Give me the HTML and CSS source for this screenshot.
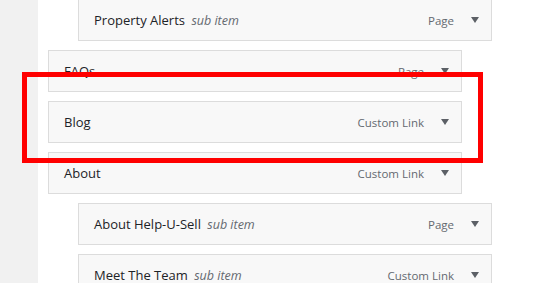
FILE: index.html
```html
<!DOCTYPE html>
<html>
<head>
<meta charset="utf-8">
<link rel="stylesheet" href="styles.css">
</head>
<body>
<div class="screen">
  <aside class="sidebar"></aside>
  <main class="content">
    <ul class="menu">
      <li class="item sub">
        <div class="handle">
          <span class="title">Property Alerts <span class="is-sub">sub item</span></span>
          <span class="controls"><span class="type">Page</span><span class="arrow"></span></span>
        </div>
      </li>
      <li class="item">
        <div class="handle">
          <span class="title">FAQs</span>
          <span class="controls"><span class="type">Page</span><span class="arrow"></span></span>
        </div>
      </li>
      <li class="item">
        <div class="handle">
          <span class="title">Blog</span>
          <span class="controls"><span class="type">Custom Link</span><span class="arrow"></span></span>
        </div>
      </li>
      <li class="item">
        <div class="handle">
          <span class="title">About</span>
          <span class="controls"><span class="type">Custom Link</span><span class="arrow"></span></span>
        </div>
      </li>
      <li class="item sub">
        <div class="handle">
          <span class="title">About Help-U-Sell <span class="is-sub">sub item</span></span>
          <span class="controls"><span class="type">Page</span><span class="arrow"></span></span>
        </div>
      </li>
      <li class="item sub">
        <div class="handle">
          <span class="title">Meet The Team <span class="is-sub">sub item</span></span>
          <span class="controls"><span class="type">Custom Link</span><span class="arrow"></span></span>
        </div>
      </li>
    </ul>
  </main>
  <div class="highlight"></div>
</div>
</body>
</html>
```

FILE: styles.css
```css
html, body {
  margin: 0;
  padding: 0;
  background: #ffffff;
}
.screen {
  position: relative;
  display: flex;
  width: 540px;
  height: 283px;
  overflow: hidden;
  font-family: "Open Sans", "Noto Sans", sans-serif;
  font-size: 12px;
  color: #1d2327;
}
.sidebar {
  width: 38px;
  flex: none;
  background: #f1f1f1;
}
.content {
  flex: 1;
  padding-left: 10px;
}
.menu {
  list-style: none;
  margin: -1px 0 0;
  padding: 0;
  display: flex;
  flex-direction: column;
  gap: 9px;
}
.item {
  width: 414px;
}
.item.sub {
  margin-left: 30px;
}
.handle {
  box-sizing: border-box;
  height: 42px;
  border: 1px solid #dcdcdc;
  background: #f8f8f8;
  display: flex;
  align-items: center;
  justify-content: space-between;
  padding: 0 12px 0 15px;
}
.title {
  font-size: 13px;
  font-weight: 500;
  color: #1d2327;
  white-space: nowrap;
}
.is-sub {
  font-size: 12.5px;
  font-weight: 400;
  font-style: italic;
  color: #646970;
  margin-left: 3px;
}
.controls {
  display: flex;
  align-items: center;
  font-size: 11.5px;
  color: #646970;
}
.type {
  margin-right: 17px;
}
.arrow {
  width: 0;
  height: 0;
  border-left: 4px solid transparent;
  border-right: 4px solid transparent;
  border-top: 6px solid #5c6066;
}
.highlight {
  position: absolute;
  left: 22px;
  top: 72px;
  width: 461px;
  height: 91px;
  box-sizing: border-box;
  border: 5px solid #ff0000;
}
```
